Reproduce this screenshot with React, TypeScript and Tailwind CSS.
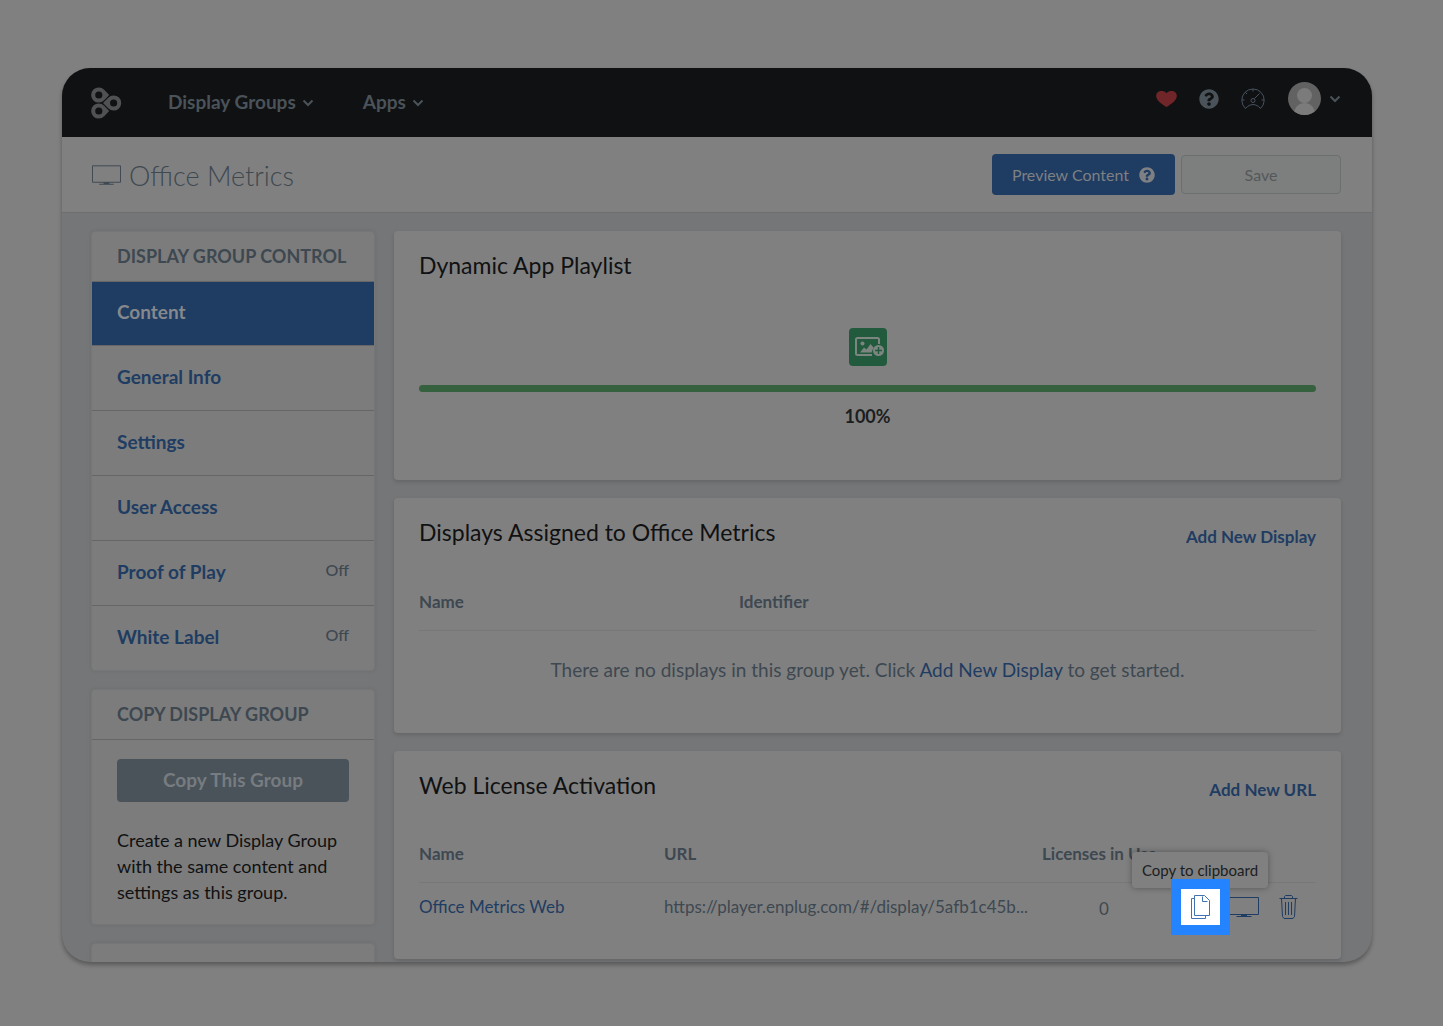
import type { ReactNode } from 'react';
import { FaQuestionCircle } from 'react-icons/fa';

type MenuItem = {
  label: string;
  status?: string;
  active?: boolean;
};

const menu: MenuItem[] = [
  { label: 'Content', active: true },
  { label: 'General Info' },
  { label: 'Settings' },
  { label: 'User Access' },
  { label: 'Proof of Play', status: 'Off' },
  { label: 'White Label', status: 'Off' },
];

function Logo() {
  return (
    <svg className="h-8 w-[31px]" viewBox="0 0 31 32" fill="#505152">
      <path fillRule="evenodd" d="M13.200 2.700 18.200 8l-5 5.300A7.600 7.600 0 1 1 13.200 2.700zM7.800 4.400a3.600 3.600 0 1 0 0 7.200 3.600 3.600 0 0 0 0-7.200z" />
      <path fillRule="evenodd" d="M13.200 18.700 18.200 24l-5 5.300A7.600 7.600 0 1 1 13.200 18.700zM7.800 20.400a3.600 3.600 0 1 0 0 7.200 3.600 3.600 0 0 0 0-7.200z" />
      <path fillRule="evenodd" d="M17.200 10.700 12 16l5.200 5.300a7.600 7.600 0 1 0 0-10.600zM22.600 12.400a3.600 3.600 0 1 1 0 7.200 3.600 3.600 0 0 1 0-7.200z" />
    </svg>
  );
}

function Chevron() {
  return (
    <svg className="h-2 w-3" viewBox="0 0 12 8" fill="none" stroke="currentColor" strokeWidth="2">
      <path d="M1.500 1.500 6 6l4.500-4.500" />
    </svg>
  );
}

function Heart() {
  return (
    <svg className="h-4 w-[21px]" viewBox="0 0 21 16" fill="#702528">
      <path d="M10.500 2.200C12 .5 13.700.1 15.500.1 18.600.1 20.800 2 20.800 5c0 3.800-4.300 7.600-10.300 10.900C4.500 12.600.2 8.800.2 5 .2 2 2.400.1 5.500.1c1.800 0 3.500.4 5 2.100z" />
    </svg>
  );
}

function Gauge() {
  return (
    <svg className="h-[22px] w-6" viewBox="0 0 24 22" fill="none" stroke="#485360" strokeWidth="1">
      <path d="M4.500 20.500A11.200 11.200 0 1 1 19.500 20.500L17.500 18.500Q12 14.500 6.500 18.500z" />
      <path d="M12 1v2.500M1 12h2.500M20.500 12H23M4.300 4.300 6 6M18.500 5.500 13.500 10.500" />
      <circle cx="12" cy="12.500" r="2" />
    </svg>
  );
}

function Avatar() {
  return (
    <svg className="size-[33px] rounded-full" viewBox="0 0 33 33">
      <rect width="33" height="33" fill="#626262" />
      <circle cx="16.500" cy="13.500" r="7.500" fill="#7b7b7b" />
      <path d="M5.500 33c1-8 5-12 11-12s10 4 11 12z" fill="#7b7b7b" />
    </svg>
  );
}

function Monitor({ className }: { className: string }) {
  return (
    <svg className={className} viewBox="0 0 30 20" fill="none" stroke="currentColor">
      <path d="M.5.500h29v17H.5z" />
      <path d="M12 17.500h6v1.500h4.500v1h-15v-1H12z" fill="currentColor" stroke="none" />
    </svg>
  );
}

function CopyIcon() {
  return (
    <svg className="h-6 w-[19px]" viewBox="0 0 19 24" fill="none" stroke="#4173b4">
      <path d="M3.500.500h10l5 5v15h-15z" />
      <path d="M11.500 1.500v5h5" />
      <path d="M3.500 3.500h-3v20h14v-3" />
    </svg>
  );
}

function Trash() {
  return (
    <svg className="h-6 w-[19px]" viewBox="0 0 19 24" fill="none" stroke="currentColor">
      <path d="M.5 3.500h18M5.500 3.500v-2l1-1h6l1 1v2" />
      <path d="m2.500 3.500 1 18 1.500 2h9l1.500-2 1-18M6.500 7v13M9.500 7v13M12.500 7v13" />
    </svg>
  );
}

function ContentIcon() {
  return (
    <svg className="size-[38px] rounded-sm bg-[#215a3d]" viewBox="0 0 38 38" fill="none" stroke="#7d8580" strokeWidth="2">
      <path d="M30 16v-4.500a1.500 1.500 0 0 0-1.500-1.500h-20A1.500 1.500 0 0 0 7 11.500v14A1.500 1.500 0 0 0 8.500 27H23" />
      <circle cx="13.500" cy="15.500" r="2" fill="#7d8580" stroke="none" />
      <path d="m11 24.500 4-5 2.500 2 4-5.500 3 3.500-2 5z" fill="#7d8580" stroke="none" />
      <circle cx="29.500" cy="22.500" r="5.500" fill="#7d8580" stroke="none" />
      <path d="M29.500 19v7M26 22.500h7" stroke="#215a3d" strokeWidth="1.500" />
    </svg>
  );
}

function SideCard({ title, children }: { title?: string; children?: ReactNode }) {
  return (
    <section className="rounded-sm border border-[#757677] bg-[#7c7c7c] shadow-[0_0_4px_rgba(0,0,0,.08)]">
      {title && <h2 className="h-[50px] border-b border-[#666] px-[25px] text-lg font-bold leading-[49px] text-[#3e4851]">{title}</h2>}
      {children}
    </section>
  );
}

function Card({ title, action, children }: { title: string; action?: string; children: ReactNode }) {
  return (
    <section className="rounded-sm bg-[#808080] px-[25px] pt-5 shadow-[0_2px_4px_rgba(0,0,0,.15)]">
      <header className="flex h-[34px] items-start justify-between">
        <h2 className="text-[23px] leading-7 text-[#101112]">{title}</h2>
        {action && <a className="pt-1 text-[17px] font-bold leading-[30px] text-[#1f3c62]" href="#add">{action}</a>}
      </header>
      {children}
    </section>
  );
}

export default function App() {
  return (
    <div className="h-screen bg-[#808080] pt-[68px] pr-[71px] pb-16 pl-[62px] font-['Lato','Liberation_Sans',sans-serif] text-[#3e4851]">
      <div className="flex h-full flex-col overflow-hidden rounded-[28px] bg-[#757678] shadow-[0_3px_4px_rgba(0,0,0,.3)]">
        <nav className="flex h-[69px] shrink-0 items-center bg-[#101112] pr-[31px] pl-[29px] text-[#4a535a]">
          <a href="#home" aria-label="Home"><Logo /></a>
          <button className="ml-[46px] flex items-center gap-1.5 text-[19px] font-bold">Display Groups <Chevron /></button>
          <button className="ml-[49px] flex items-center gap-1.5 text-[19px] font-bold">Apps <Chevron /></button>
          <div className="ml-auto flex items-center pb-2">
            <button aria-label="Favorites"><Heart /></button>
            <button className="ml-[22px]" aria-label="Help"><FaQuestionCircle className="size-5" /></button>
            <button className="ml-[22px]" aria-label="Dashboard"><Gauge /></button>
            <button className="ml-[23px] flex items-center gap-2" aria-label="Account"><Avatar /><Chevron /></button>
          </div>
        </nav>

        <header className="flex h-[76px] shrink-0 items-center border-b border-[#6d6e70] bg-[#808080] pr-[31px] pl-[30px]">
          <Monitor className="h-5 w-[29px]" />
          <h1 className="ml-2 pt-1 text-[27px] font-light">Office Metrics</h1>
          <button className="ml-auto flex h-[41px] w-[183px] items-center justify-center gap-2.5 rounded-sm bg-[#1f3c62] text-base text-[#7e8083]">
            Preview Content <FaQuestionCircle className="size-4" />
          </button>
          <button className="ml-1.5 h-[39px] w-40 rounded-sm border border-[#6c6f6f] bg-[#7c7f7e] text-base text-[#55585b]">Save</button>
        </header>

        <div className="flex min-h-0 flex-1 gap-[19px] overflow-hidden pt-[18px] pr-[31px] pl-[29px]">
          <aside className="flex w-[284px] shrink-0 flex-col gap-[18px]">
            <SideCard title="DISPLAY GROUP CONTROL">
              <ul className="divide-y divide-[#666]">
                {menu.map(({ label, status, active }) => (
                  <li key={label}>
                    <a className={`flex items-center justify-between px-[25px] pb-0.5 text-[19px] font-bold ${active ? 'h-[63px] bg-[#1f3c62] text-[#85888c]' : 'h-16 text-[#1f3c62]'}`} href="#section">
                      {label}
                      {status && <span className="pb-1 text-base font-medium text-[#3e4851]">{status}</span>}
                    </a>
                  </li>
                ))}
              </ul>
            </SideCard>

            <SideCard title="COPY DISPLAY GROUP">
              <div className="px-[25px] py-[19px]">
                <button className="h-[43px] w-full rounded-sm bg-[#4a535a] text-[19px] font-bold text-[#777c80]">Copy This Group</button>
                <p className="mt-[25px] text-lg leading-[26px] text-[#101112]">Create a new Display Group with the same content and settings as this group.</p>
              </div>
            </SideCard>

            <SideCard>
              <div className="h-20" />
            </SideCard>
          </aside>

          <main className="flex min-w-0 flex-1 flex-col gap-[18px]">
            <Card title="Dynamic App Playlist">
              <div className="flex flex-col items-center pt-[43px] pb-[50px]">
                <ContentIcon />
                <div className="mt-[19px] h-[7px] w-full rounded-sm bg-[#36613f]" />
                <p className="mt-2.5 text-lg font-bold text-[#1b1e21]">100%</p>
              </div>
            </Card>

            <Card title="Displays Assigned to Office Metrics" action="Add New Display">
              <table className="w-full table-fixed">
                <thead>
                  <tr className="h-[78px] border-b border-[#777879] text-left align-bottom text-[17px]">
                    <th className="w-[320px] pb-[15px]">Name</th>
                    <th className="pb-[15px]">Identifier</th>
                  </tr>
                </thead>
                <tbody>
                  <tr className="h-[103px] align-top">
                    <td className="pt-[25px] text-center text-[19px]" colSpan={2}>
                      There are no displays in this group yet. Click <a className="text-[#1f3c62]" href="#add">Add New Display</a> to get started.
                    </td>
                  </tr>
                </tbody>
              </table>
            </Card>

            <Card title="Web License Activation" action="Add New URL">
              <table className="w-full table-fixed">
                <thead>
                  <tr className="h-[77px] border-b border-[#777879] text-left align-bottom text-[17px]">
                    <th className="w-[245px] pb-[15px]">Name</th>
                    <th className="pb-[15px]">URL</th>
                    <th className="w-[124px] pb-[15px] whitespace-nowrap">Licenses in Use</th>
                    <th className="w-[150px] pb-[15px]" aria-label="Actions" />
                  </tr>
                </thead>
                <tbody>
                  <tr className="h-[77px] align-top text-[17px]">
                    <td className="pt-[11px]"><a className="text-[#1f3c62]" href="#web">Office Metrics Web</a></td>
                    <td className="pt-[11px]">https://player.enplug.com/#/display/5afb1c45b...</td>
                    <td className="pt-[13px] text-center">0</td>
                    <td className="pt-3 text-[#1f3c62]">
                      <div className="flex items-center justify-end gap-5 pr-[18px]">
                        <div className="relative">
                          <div className="absolute -top-[43px] -left-[58px] h-9 w-[136px] rounded bg-[#808080] text-center text-[15px] leading-9 text-[#1b1e21] shadow-[0_0_6px_rgba(0,0,0,.35)]" role="tooltip">
                            Copy to clipboard
                          </div>
                          <button className="absolute -top-4 -left-[19px] z-10 flex h-14 w-[59px] items-center justify-center border-10 border-[#2483ff] bg-white" aria-label="Copy to clipboard">
                            <CopyIcon />
                          </button>
                          <div className="h-6 w-[19px]" />
                        </div>
                        <button aria-label="Open display"><Monitor className="h-5 w-[30px]" /></button>
                        <button aria-label="Delete"><Trash /></button>
                      </div>
                    </td>
                  </tr>
                </tbody>
              </table>
            </Card>
          </main>
        </div>
      </div>
    </div>
  );
}
